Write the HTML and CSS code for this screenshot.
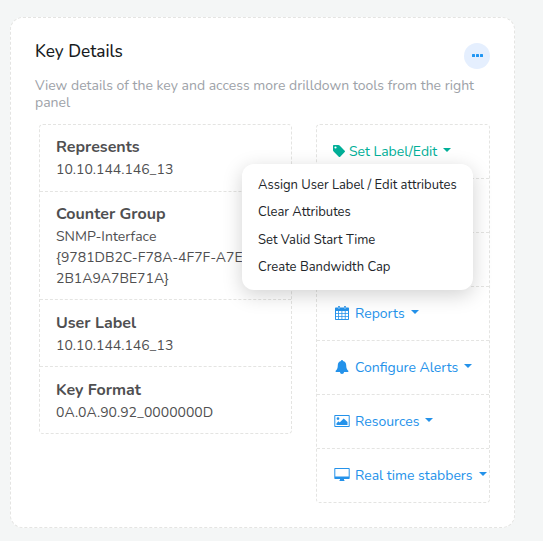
FILE: index.html
```html
<!DOCTYPE html>
<html lang="en">
<head>
<meta charset="utf-8">
<title>Key Details</title>
<link rel="stylesheet" href="styles.css">
</head>
<body>
<main class="card">
  <header class="head">
    <h1>Key Details</h1>
    <button class="more" aria-label="More"><i></i><i></i><i></i></button>
  </header>
  <p class="intro">View details of the key and access more drilldown tools from the right panel</p>
  <div class="columns">
    <dl class="list details">
      <div class="row"><dt>Represents</dt><dd>10.10.144.146_13</dd></div>
      <div class="row tall"><dt>Counter Group</dt><dd>SNMP-Interface<br>{9781DB2C-F78A-4F7F-A7E8-<br>2B1A9A7BE71A}</dd></div>
      <div class="row low"><dt>User Label</dt><dd>10.10.144.146_13</dd></div>
      <div class="row low"><dt>Key Format</dt><dd>0A.0A.90.92_0000000D</dd></div>
    </dl>
    <nav class="list tools">
      <div class="row active">
        <a class="tool"><svg class="tag" width="12" height="12" viewBox="0 0 12 12"><path fill-rule="evenodd" d="M1 0h4.400l1.200.6 5.100 5.100c.4.4.4 1 0 1.400l-4.500 4.600c-.4.4-1 .4-1.400 0L.6 6.600 0 5.400V1c0-.6.4-1 1-1zm1.500 1.400a1.100 1.100 0 1 0 0 2.200 1.100 1.100 0 0 0 0-2.200z"/></svg><span>Set Label/Edit</span><b class="caret"></b></a>
        <div class="menu">
          <a>Assign User Label / Edit attributes</a>
          <a>Clear Attributes</a>
          <a>Set Valid Start Time</a>
          <a>Create Bandwidth Cap</a>
        </div>
      </div>
      <div class="row"></div>
      <div class="row"></div>
      <div class="row"><a class="tool"><svg width="16" height="16" viewBox="0 0 16 16"><path fill-rule="evenodd" d="M2 2.500h2V1.800c0-1.100 2-1.100 2 0v.7h4v-.7c0-1.100 2-1.100 2 0v.7h2c.6 0 1 .4 1 1V14c0 .6-.4 1-1 1H2c-.6 0-1-.4-1-1V3.500c0-.6.4-1 1-1zM2 6v2.200h2.200V6zm3 0v2.200h2.500V6zm3.300 0v2.200h2.500V6zm3.300 0v2.200H14V6zM2 9v2.200h2.200V9zm3 0v2.200h2.500V9zm3.300 0v2.200h2.500V9zm3.300 0v2.200H14V9zM2 12v2h2.200v-2zm3 0v2h2.500v-2zm3.300 0v2h2.500v-2zm3.300 0v2H14v-2zM4.700 2v2h.6V2zm6 0v2h.6V2z"/></svg><span>Reports</span><b class="caret"></b></a></div>
      <div class="row"><a class="tool"><svg width="16" height="16" viewBox="0 0 16 16"><path d="M8 1c.6 0 1 .4.900 1 2.200.5 3.300 2.200 3.300 4.300 0 3 .8 4.700 2.300 5.700 0 .6-.4 1-1 1H10c0 1.200-.8 2-2 2s-2-.8-2-2H2.500c-.6 0-1-.4-1-1 1.500-1 2.300-2.700 2.300-5.700C3.800 4.200 4.900 2.500 7.100 2 7 1.400 7.400 1 8 1z"/></svg><span>Configure Alerts</span><b class="caret"></b></a></div>
      <div class="row"><a class="tool"><svg width="16" height="16" viewBox="0 0 16 16"><path fill-rule="evenodd" d="M1.300 2h13.400c.6 0 1 .4 1 1v10c0 .6-.4 1-1 1H1.300c-.6 0-1-.4-1-1V3c0-.6.4-1 1-1zm0 1v10h13.400V3zM4 4.200a1.400 1.400 0 1 1 0 2.800 1.400 1.400 0 0 1 0-2.800zM2.500 12v-1.700l2-2 1.200 1.200 4-4 3.800 3.600V12z"/></svg><span>Resources</span><b class="caret"></b></a></div>
      <div class="row"><a class="tool"><svg width="16" height="16" viewBox="0 0 16 16"><path fill-rule="evenodd" d="M1.300 1h13.400c.6 0 1 .4 1 1v9c0 .6-.4 1-1 1H10v1.200c.6.200.8.400.8.800H5.200c0-.4.2-.6.800-.8V12H1.300c-.6 0-1-.4-1-1V2c0-.6.4-1 1-1zm0 1v7.500h13.400V2z"/></svg><span>Real time stabbers</span><b class="caret"></b></a></div>
    </nav>
  </div>
</main>
</body>
</html>
```
FILE: styles.css
```css
* { box-sizing: border-box; }
body {
  margin: 0;
  padding: 17px 28px 13px 10px;
  background: #f4f6f6;
  color: #4f4f51;
  font-family: Nunito, Lato, "Liberation Sans", sans-serif;
  font-size: 14px;
}
.card {
  height: 511px;
  padding: 24px;
  background: #fff;
  border: 1px dashed #e4e4e2;
  border-radius: 13px;
}
.head { display: flex; justify-content: space-between; height: 28px; }
h1 {
  margin: -2px 0 0;
  color: #181c1e;
  font-size: 17.200px;
  font-weight: 500;
  line-height: 24px;
}
.more {
  display: flex;
  align-items: center;
  justify-content: center;
  gap: 1px;
  width: 26px;
  height: 26px;
  margin-top: 1px;
  padding: 0 0 1px;
  border: 0;
  border-radius: 50%;
  background: #e5effe;
}
.more i { width: 3px; height: 3px; border-radius: .5px; background: #2196f3; }
.intro {
  margin: 7px 0 0;
  color: #9da2a8;
  line-height: 17px;
}
.columns { display: flex; align-items: flex-start; gap: 24px; margin: 13px 0 0 4px; }
.list { margin: 0; border: 1px dashed #e4e4e2; border-radius: 4px; }
.list .row + .row { border-top: 1px dashed #e4e4e2; }
.details { width: 253px; }
.details .row { height: 67px; padding: 10px 16px; }
.details .row:first-child { height: 66px; }
.details .tall { height: 108px; }
.details .low { padding-top: 11px; }
dt { font-size: 16px; font-weight: 700; line-height: 24px; }
dd { margin: 0; line-height: 21px; white-space: nowrap; }
.tools { width: 174px; }
.tools .row { position: relative; height: 54px; padding: 16px 0 0 17px; }
.tools .row:first-child { height: 53px; }
.tool {
  display: flex;
  align-items: center;
  height: 20px;
  color: #2492ea;
  white-space: nowrap;
}
.tool svg { flex: none; margin-right: 5px; fill: currentColor; }
.tool .tag { margin: 0 4px 0 -1px; }
.active .tool { color: #00af98; }
.caret {
  margin: -3px 0 0 6px;
  border: 4px solid transparent;
  border-top-color: currentColor;
  border-bottom: 0;
}
.menu {
  position: absolute;
  z-index: 1;
  top: 39px;
  left: -75px;
  width: 231px;
  height: 126px;
  padding: 8px 16px;
  border-radius: 12px;
  background: #fff;
  box-shadow: 0 5px 20px rgba(0, 0, 0, .18);
  color: #212529;
  font-size: 13px;
}
.menu a { display: block; height: 27.400px; line-height: 27px; white-space: nowrap; }
```
